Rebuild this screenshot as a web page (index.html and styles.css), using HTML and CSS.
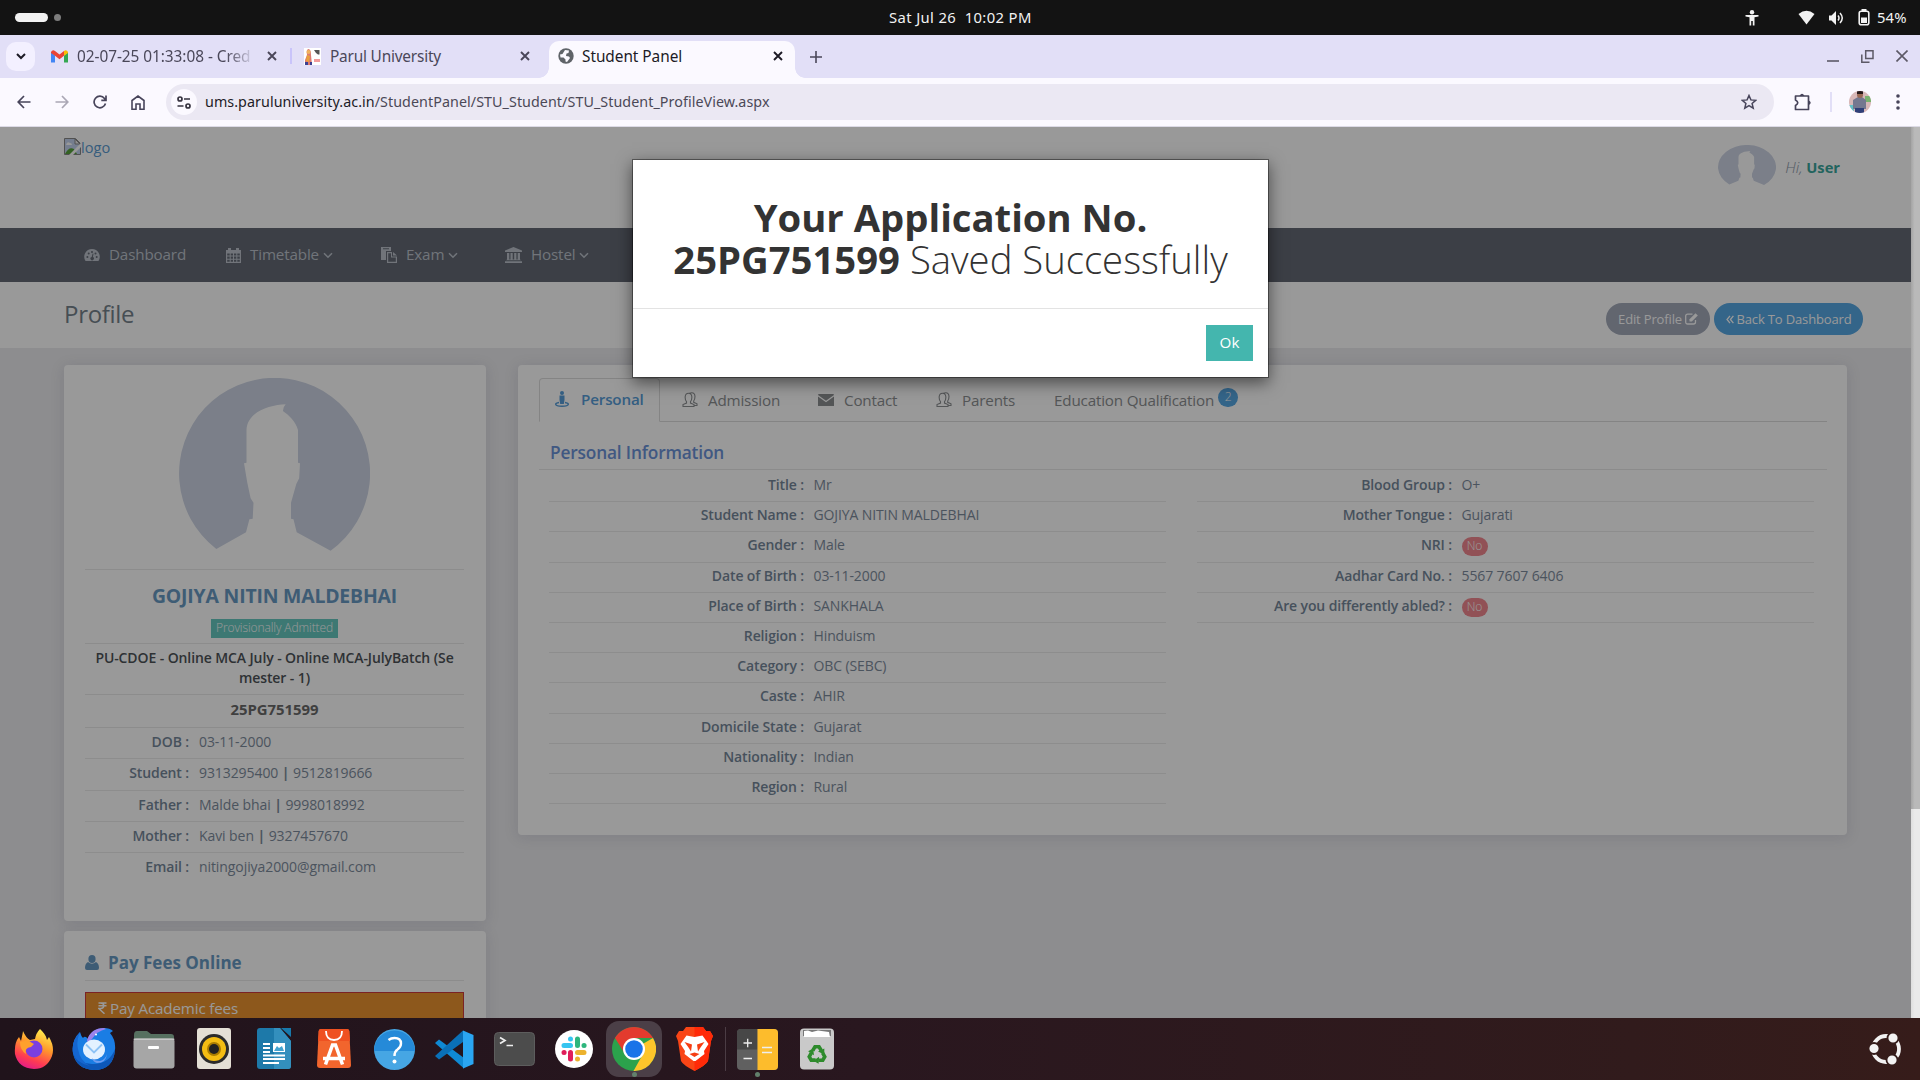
FILE: index.html
```html
<!DOCTYPE html>
<html lang="en">
<head>
<meta charset="utf-8">
<title>Student Panel</title>
<link rel="stylesheet" href="styles.css">
</head>
<body>
<svg class="defs" width="0" height="0">
  <symbol id="face" viewBox="0 0 191 173"><path fill="#cdd4e4" d="M37.3 171A95.5 95.5 0 1 1 151.6 172.7L117.7 154.3L114.5 141.3L112 140.7V124.7L117.3 106L120.2 100.3L121 85.3L119 84.7V52C117 44 110 37 103.9 33Q104 29 106.7 26.3C90 27 68 34 67.5 52V84.7L65 85.3L68.3 104.7L71.6 120.3L74.5 124.7L73.7 140.7L70.4 141.3L67 154.3Z"/></symbol>
  <symbol id="close" viewBox="0 0 10 10"><path d="M1 1L9 9M9 1L1 9" stroke="currentColor" stroke-width="1.9" fill="none"/></symbol>
  <symbol id="caret" viewBox="0 0 10 7"><path d="M1 1.2L5 5.2L9 1.2" stroke="currentColor" stroke-width="1.5" fill="none"/></symbol>
  <symbol id="people" viewBox="0 0 16 16"><path d="M6.5 14.5H1V12.6L4.5 11.1V9.6C3.4 8.4 3 6.8 3.2 4.6C3.4 2.4 4.6 1.3 6.5 1.3S9.600 2.400 9.800 4.600C10 6.800 9.600 8.400 8.500 9.600V11.100L12 12.600V14.500H6.500M7.500 1.300C10 0 13 1 13 4.300C13 7 12.500 8 11.700 9V10.300L15 11.800V13.500H12" fill="none" stroke="currentColor" stroke-width="1.1"/></symbol>
</svg>

<div class="topbar">
  <div class="spaces"><i class="pill"></i><i class="dot"></i></div>
  <div class="clock">Sat Jul 26&nbsp; 10:02 PM</div>
  <div class="tray">
    <svg class="access" width="14" height="16" viewBox="0 0 14 16" fill="#f2f2f2"><circle cx="7" cy="2.200" r="2.200"/><path d="M.5 5H13.500V6.600L9.500 7.200V15.500H7.800V11H6.200V15.500H4.500V7.200L.5 6.600Z"/></svg>
    <svg class="wifi" width="17" height="15" viewBox="0 0 17 15" fill="#f2f2f2"><path d="M.5 4Q8.500 -2.500 16.500 4L8.500 14.500Z"/></svg>
    <svg class="vol" width="17" height="16" viewBox="0 0 17 16"><path d="M1 5.500H3.500L8 1V15L3.500 10.500H1Z" fill="#f2f2f2"/><path d="M10 5.500Q12 8 10 10.500M12 3Q16.500 8 12 13" stroke="#f2f2f2" stroke-width="1.500" fill="none"/></svg>
    <svg class="bat" width="12" height="17" viewBox="0 0 12 17"><rect x="1.200" y="2.200" width="9.600" height="13.600" rx="2" fill="none" stroke="#f2f2f2" stroke-width="1.600"/><path d="M3.500 0H8.500V2H3.500ZM3 8.500H9V14H3Z" fill="#f2f2f2"/></svg>
    <span class="pct">54%</span>
  </div>
</div>

<div class="tabstrip">
  <div class="tabsearch"><svg width="10" height="7"><path d="M1 1L5 5L9 1" stroke="#1d1b26" stroke-width="2" fill="none"/></svg></div>
  <div class="tab tab1">
    <svg width="17" height="13" viewBox="0 0 17 13"><path d="M0 2V12.500H4V5.500Z" fill="#4285f4"/><path d="M17 2V12.500H13V5.500Z" fill="#34a853"/><path d="M0 2Q1.500-.8 4 1L8.500 4.600L13 1V5.700L8.500 9.300L4 5.700L0 3Z" fill="#ea4335"/><path d="M13 1Q15.500-.8 17 2V3L13 5.700Z" fill="#fbbc04"/></svg>
    <span class="tt fade">02-07-25 01:33:08 - Cred</span>
    <svg class="x" width="10" height="10"><use href="#close"/></svg>
  </div>
  <div class="tab tab2">
    <svg width="17" height="17" viewBox="0 0 17 17"><rect width="17" height="17" fill="#fff"/><path d="M1 17V12L3 7Q2 1 4.500 1T7 7L8 17Z" fill="#dd7a70"/><circle cx="4.500" cy="4" r="2" fill="#f0b25c"/><path d="M3 7L6 8L5 14L2 13Z" fill="#e9a13c"/><path d="M1 14H4V17H1ZM6 14H8V17H6Z" fill="#3c3f90"/><path d="M10 2H15.500V6.500H14L12 5Z" fill="#555"/><path d="M10 11H16V14H10Z" fill="#f29a9a"/></svg>
    <span class="tt">Parul University</span>
    <svg class="x" width="10" height="10"><use href="#close"/></svg>
  </div>
  <div class="tab active">
    <svg width="16" height="16" viewBox="0 0 16 16"><circle cx="8" cy="8" r="7.700" fill="#5f6368"/><path d="M7 2L11 2.500L10.500 5L8.500 5.500L8 8L11 8.500L12 10L9 14L7.500 13.500L7.500 11.500L5.500 9.500H2.500L2 6.500L4.500 6Z" fill="#fbf9ff"/></svg>
    <span class="tt">Student Panel</span>
    <svg class="x" width="10" height="10"><use href="#close"/></svg>
  </div>
  <svg class="plus" width="12" height="12"><path d="M6 0V12M0 6H12" stroke="#4a4759" stroke-width="1.600"/></svg>
  <div class="wins">
    <svg width="12" height="12"><path d="M0 11H12" stroke="#5c5966" stroke-width="1.600"/></svg>
    <svg width="13" height="13"><path d="M4.700.8H12V8.500H4.700ZM.8 4.500V12.200H8.500" fill="none" stroke="#5c5966" stroke-width="1.500"/></svg>
    <svg width="12" height="12"><path d="M.5.5L11.500 11.500M11.500.5L.5 11.500" stroke="#5c5966" stroke-width="1.600"/></svg>
  </div>
</div>

<div class="toolbar">
  <div class="navs">
    <svg width="14" height="14"><path d="M7 1L1.200 7L7 13M1.200 7H13.500" fill="none" stroke="#47445a" stroke-width="1.700"/></svg>
    <svg width="14" height="14"><path d="M7 1L12.800 7L7 13M12.800 7H.5" fill="none" stroke="#aaa7b5" stroke-width="1.700"/></svg>
    <svg width="14" height="14"><path d="M12.500 8.500A5.800 5.800 0 1 1 11.500 3.400L12.500 5M13 .5V5.300H8.300" fill="none" stroke="#47445a" stroke-width="1.700"/></svg>
    <svg width="14" height="15"><path d="M1 14.200V5.500L7 1L13 5.500V14.200H9V9H5V14.200Z" fill="none" stroke="#47445a" stroke-width="1.600"/></svg>
  </div>
  <div class="omni">
    <div class="site"><svg width="14" height="13"><g fill="none" stroke="#35323f" stroke-width="1.700"><circle cx="3" cy="3" r="2"/><path d="M7 3H13M.5 10H6.500"/><circle cx="11" cy="10" r="2"/></g></svg></div>
    <span class="url"><b>ums.paruluniversity.ac.in</b>/StudentPanel/STU_Student/STU_Student_ProfileView.aspx</span>
    <svg class="star" width="16" height="16" viewBox="0 0 16 16"><path d="M8 1.500L9.900 5.900L14.700 6.300L11.100 9.500L12.200 14.200L8 11.700L3.800 14.200L4.900 9.500L1.300 6.300L6.100 5.900Z" fill="none" stroke="#47445a" stroke-width="1.500"/></svg>
  </div>
  <svg class="ext" width="18" height="18" viewBox="0 0 18 18"><path d="M1.500 3H14.500V16.500H1.500V12.500Q6 9.700 1.500 7Z" fill="none" stroke="#47445a" stroke-width="1.700" stroke-linejoin="round"/><path d="M5.500 3Q8-1.500 10.500 3ZM14.500 7.200Q19 9.700 14.500 12.200Z" fill="#47445a"/></svg>
  <i class="bar"></i>
  <svg class="me" width="22" height="22" viewBox="0 0 22 22"><defs><clipPath id="mc"><circle cx="11" cy="11" r="11"/></clipPath></defs><g clip-path="url(#mc)"><path fill="#d8b8b8" d="M0 0H22V22H0Z"/><path fill="#78b26e" d="M16 5H22V11H16Z"/><path fill="#62c0c6" d="M0 14H5V22H0Z"/><path fill="#747890" d="M4 9L9 6H13L17 9V18H4Z"/><path fill="#2f3f78" d="M6 17H15V22H6Z"/><circle cx="11" cy="4" r="3" fill="#9b6a55"/><path fill="#26191b" d="M8 0H14V3H8Z"/></g></svg>
  <svg class="dots" width="4" height="16" fill="#47445a"><circle cx="2" cy="2" r="1.800"/><circle cx="2" cy="8" r="1.800"/><circle cx="2" cy="14" r="1.800"/></svg>
</div>

<div class="viewport">
 <div class="page">
  <header class="head">
    <a class="logo"><svg width="17" height="17" viewBox="0 0 17 17"><path d="M.5.5H11.500L16.500 5.500V16.500H.5Z" fill="#c4d3ee" stroke="#888"/><path d="M11 1V6H16Z" fill="#eee" stroke="#888"/><path d="M1 16Q5 8 10 11L13 16Z" fill="#57a33b"/><path d="M2 7Q3 3 6 5Q8 5 8 7Z" fill="#fff"/><path d="M17 5V9L9 17H5Z" fill="#fff"/></svg>logo</a>
    <div class="user"><svg width="58" height="40" viewBox="0 0 191 173" preserveAspectRatio="none"><use href="#face" width="191" height="173"/></svg><span class="hi"><i>Hi,</i> <b>User</b></span></div>
  </header>
  <nav class="menu">
    <a class="m1"><svg width="16" height="16" viewBox="0 0 16 16" fill="currentColor"><path fill-rule="evenodd" d="M8 2A7.800 7.800 0 0 0 1.500 14H14.500A7.800 7.800 0 0 0 8 2ZM3.400 9A1 1 0 1 1 3.400 11A1 1 0 1 1 3.400 9M4.700 5.600A1 1 0 1 1 4.700 7.600A1 1 0 1 1 4.700 5.600M8 4A1 1 0 1 1 8 6A1 1 0 1 1 8 4M11.500 5.600A1 1 0 1 1 11.500 7.600A1 1 0 1 1 11.500 5.600M12.700 9A1 1 0 1 1 12.700 11A1 1 0 1 1 12.700 9M8.700 6.500L9.500 6.700L8.900 10A1.700 1.700 0 1 1 7.700 9.900Z"/></svg><span>Dashboard</span></a>
    <a class="m2"><svg width="15" height="16" viewBox="0 0 15 16"><path fill="currentColor" fill-rule="evenodd" d="M0 3H2V1H5V3H10V1H13V3H15V16H0ZM1.200 6.500V8.500H3.700V6.500ZM4.700 6.500V8.500H7V6.500ZM8 6.500V8.500H10.300V6.500ZM11.300 6.500V8.500H13.800V6.500ZM1.200 9.500V11.700H3.700V9.500ZM4.700 9.500V11.700H7V9.500ZM8 9.500V11.700H10.300V9.500ZM11.300 9.500V11.700H13.800V9.500ZM1.200 12.700V14.800H3.700V12.700ZM4.700 12.700V14.800H7V12.700ZM8 12.700V14.800H10.300V12.700ZM11.300 12.700V14.800H13.800V12.700Z"/></svg><span>Timetable</span><svg width="10" height="7"><use href="#caret"/></svg></a>
    <a class="m3"><svg width="16" height="16" viewBox="0 0 16 16" fill="currentColor"><path fill-rule="evenodd" d="M0 0H10V4H5V13H0ZM2 1.200V2.200H8V1.200ZM6 5H11V9.500H16V16H6ZM12 5L16 8.500H12ZM7.200 6.200V14.800H14.800V10.500H10V6.200Z"/></svg><span>Exam</span><svg width="10" height="7"><use href="#caret"/></svg></a>
    <a class="m4"><svg width="17" height="16" viewBox="0 0 17 16" fill="currentColor"><path d="M8.500 0L17 3.500V5H0V3.500ZM2 6H4.300V12.500H5.500V6H7.700V12.500H9.200V6H11.400V12.500H12.700V6H15V12.500L16 13.200H1L2 12.500ZM0 14.200H17V16H0Z"/></svg><span>Hostel</span><svg width="10" height="7"><use href="#caret"/></svg></a>
  </nav>
  <div class="title">
    <h1>Profile</h1>
    <div class="btns"><a class="btn grey">Edit Profile <svg width="13" height="12" viewBox="0 0 13 12"><path d="M10.500 7V9Q10.500 11 8.500 11H2.700Q.7 11 .7 9V3Q.7 1.200 2.700 1.200H7.500" fill="none" stroke="currentColor" stroke-width="1.300"/><path d="M4.500 8.500V6.200L10.500.2L12.800 2.500L6.800 8.500Z" fill="currentColor"/></svg></a><a class="btn blue"><svg width="8" height="9"><path d="M4 .8L1 4.500L4 8.200M7.400.8L4.400 4.500L7.400 8.200" fill="none" stroke="currentColor" stroke-width="1.300"/></svg> Back To Dashboard</a></div>
  </div>
  <main class="content">
    <aside class="side">
      <section class="card bio">
        <svg class="avatar" width="191" height="173"><use href="#face"/></svg>
        <h2>GOJIYA NITIN MALDEBHAI</h2>
        <div class="status"><span>Provisionally Admitted</span></div>
        <p class="course">PU-CDOE - Online MCA July - Online MCA-JulyBatch (Se<br>mester - 1)</p>
        <p class="appno">25PG751599</p>
        <dl class="rows">
          <div><dt>DOB :</dt><dd>03-11-2000</dd></div>
          <div><dt>Student :</dt><dd>9313295400 <b>|</b> 9512819666</dd></div>
          <div><dt>Father :</dt><dd>Malde bhai <b>|</b> 9998018992</dd></div>
          <div><dt>Mother :</dt><dd>Kavi ben <b>|</b> 9327457670</dd></div>
          <div><dt>Email :</dt><dd>nitingojiya2000@gmail.com</dd></div>
        </dl>
      </section>
      <section class="card fees">
        <h3><svg width="14" height="15" viewBox="0 0 14 15" fill="currentColor"><ellipse cx="7" cy="4" rx="3.600" ry="4"/><path d="M3 7Q7 10.500 11 7Q14 8.500 14 13Q14 15 12 15H2Q0 15 0 13Q0 8.500 3 7Z"/></svg>Pay Fees Online</h3>
        <a class="pay"><svg width="9" height="12" viewBox="0 0 9 12"><path d="M.5 1H8.500M.5 3.700H8.500M.5 1H2.500Q5.800 1 5.800 3.700T2.500 6.500H.8L6.500 11.700" fill="none" stroke="currentColor" stroke-width="1.500"/></svg>Pay Academic fees</a>
      </section>
    </aside>
    <section class="card info">
      <div class="ptabs">
        <a class="pt on"><svg width="14" height="16" viewBox="0 0 14 16"><circle cx="7" cy="2" r="2" fill="currentColor"/><path d="M4.500 4.500H9.500V9L8.800 13H5.200L4.500 9Z" fill="currentColor"/><path d="M4 11.500Q.7 12 .7 13.300Q1 15.200 7 15.200T13.300 13.300Q13.300 12 10 11.500" fill="none" stroke="currentColor" stroke-width="1.400"/></svg>Personal</a>
        <a class="pt adm"><svg width="16" height="16"><use href="#people"/></svg>Admission</a>
        <a class="pt con"><svg width="16" height="12" viewBox="0 0 16 12" fill="currentColor"><path d="M.5 0H15.500L16 1L8 6.800L0 1ZM0 2.500L8 8.300L16 2.500V12H0Z"/></svg>Contact</a>
        <a class="pt par"><svg width="16" height="16"><use href="#people"/></svg>Parents</a>
        <a class="pt edu">Education Qualification<em>2</em></a>
      </div>
      <h3 class="sec">Personal Information</h3>
      <div class="cols">
        <dl class="rows">
          <div><dt>Title :</dt><dd>Mr</dd></div>
          <div><dt>Student Name :</dt><dd>GOJIYA NITIN MALDEBHAI</dd></div>
          <div><dt>Gender :</dt><dd>Male</dd></div>
          <div><dt>Date of Birth :</dt><dd>03-11-2000</dd></div>
          <div><dt>Place of Birth :</dt><dd>SANKHALA</dd></div>
          <div><dt>Religion :</dt><dd>Hinduism</dd></div>
          <div><dt>Category :</dt><dd>OBC (SEBC)</dd></div>
          <div><dt>Caste :</dt><dd>AHIR</dd></div>
          <div><dt>Domicile State :</dt><dd>Gujarat</dd></div>
          <div><dt>Nationality :</dt><dd>Indian</dd></div>
          <div><dt>Region :</dt><dd>Rural</dd></div>
        </dl>
        <dl class="rows">
          <div><dt>Blood Group :</dt><dd>O+</dd></div>
          <div><dt>Mother Tongue :</dt><dd>Gujarati</dd></div>
          <div><dt>NRI :</dt><dd><span class="no">No</span></dd></div>
          <div><dt>Aadhar Card No. :</dt><dd>5567 7607 6406</dd></div>
          <div><dt>Are you differently abled? :</dt><dd><span class="no">No</span></dd></div>
        </dl>
      </div>
    </section>
  </main>
  <div class="shade"></div>
  <div class="modal">
    <div class="mbody"><b>Your Application No.<br>25PG751599</b> Saved Successfully</div>
    <div class="mfoot"><button>Ok</button></div>
  </div>
 </div>
 <div class="scroll"><i></i></div>
</div>

<footer class="dock">
  <div class="app"><svg width="40" height="42" viewBox="0 0 40 42"><defs><linearGradient id="ff" x1=".7" y1="0" x2=".3" y2="1"><stop offset="0" stop-color="#fff14f"/><stop offset=".4" stop-color="#ff9a2b"/><stop offset=".75" stop-color="#ff3b52"/><stop offset="1" stop-color="#e01b8a"/></linearGradient></defs><path d="M26 1C29 4 32 7 33 12L35 9Q41 19 38 28Q33 41 20 41Q4 40 1 26Q0 15 5 9L7 13Q9 4 9 3Q12 10 16 12L21 11Q22 5 26 1Z" fill="url(#ff)"/><circle cx="20" cy="21" r="8.500" fill="#7b3fe0"/><path d="M6 14Q14 11 20 16L17 19Q10 20 12 26Q6 22 6 14Z" fill="#ffa02c"/></svg></div>
  <div class="app"><svg width="44" height="44" viewBox="0 0 44 44"><path d="M16 12Q20 1 32 1Q38 1 41 4L38 6Q44 13 43 23Q41 43 22 43Q4 42 1 26Q-1 14 8 5Q9 9 11 11Q13 8 16 12Z" fill="#1a7de4"/><path d="M15 13Q19 1 32 1L34 2Q25 4 20 12L16 17Z" fill="#9b82ec"/><path d="M1 26Q8 38 22 37Q38 36 43 22Q42 43 22 43Q4 42 1 26Z" fill="#0d57b8"/><path d="M8 5Q4 14 6 22Q8 34 18 39Q4 36 1 26Q-1 14 8 5Z" fill="#1566cf"/><ellipse cx="22" cy="22.500" rx="11" ry="10" fill="#e3f1ff"/><path d="M14 17.500L22 25.500L30 17.500" fill="none" stroke="#8cc2f5" stroke-width="1.800"/><path d="M20 31Q22 34 28 34Q33 33 35 27Q34 36 25 36Q21 35 20 31Z" fill="#6f9cf0"/><circle cx="24" cy="7.500" r="1" fill="#fff"/></svg></div>
  <div class="app"><svg width="42" height="40" viewBox="0 0 42 40"><path d="M1 6Q1 2 4 2H14L18 5H38Q41 5 41 8V20H1Z" fill="#577060"/><rect x=".5" y="9.500" width="41" height="30" rx="3" fill="#a6a6a6"/><rect x=".5" y="9.500" width="41" height="1.500" rx=".7" fill="#c7c7c7"/><rect x="15" y="17" width="11" height="3" rx="1" fill="#fff"/></svg></div>
  <div class="app"><svg width="34" height="42" viewBox="0 0 34 42"><rect width="34" height="41" rx="3" fill="#e4dfd5"/><circle cx="17" cy="21" r="15" fill="#2b2b2b"/><circle cx="17" cy="21" r="12" fill="#f4bd13"/><circle cx="17" cy="21" r="7" fill="#a97c00"/><circle cx="17" cy="21" r="5" fill="#222"/></svg></div>
  <div class="app"><svg width="34" height="42" viewBox="0 0 34 42"><path d="M3 0H23L34 13V38Q34 41 31 41H3Q0 41 0 38V3Q0 0 3 0Z" fill="#1d79a9"/><path d="M17 0H23L34 13V38Q34 41 31 41H17Z" fill="#338fbd"/><path d="M24 0H34V9Z" fill="#1879ab"/><path d="M6 16H13M6 20H13M6 24H13M6 27.500H28M6 31H28M6 35H22" stroke="#fff" stroke-width="2"/><rect x="16" y="15" width="12" height="9" fill="#fff"/><path d="M17 23L20 18L22 20L25 18L27 23Z" fill="#43a3d0"/></svg></div>
  <div class="app"><svg width="34" height="40" viewBox="0 0 34 40"><path d="M4 0H30Q32 0 32.300 2L34 36Q34 39 31 39H3Q0 39 0 36L1.700 2Q2 0 4 0Z" fill="#f2652d"/><path d="M4 0H30Q32 0 32.300 2L33 12H1L1.700 2Q2 0 4 0Z" fill="#ef5121"/><path d="M9 2Q9 11 17 11T25 2" fill="none" stroke="#fff" stroke-width="1.800"/><path d="M8.500 35.500L15.500 16H18.500L25.500 35.500M6 29.500H28" fill="none" stroke="#fff" stroke-width="3.500"/></svg></div>
  <div class="app"><svg class="help" width="41" height="41" viewBox="0 0 41 41"><circle cx="20.500" cy="20.500" r="20.500" fill="#46a6e4"/><path d="M0 22A20.500 20.500 0 0 1 41 22Z" fill="#258ad8"/><path d="M14.500 11Q17 9 20.500 9Q27 9 27 14.500Q27 18 23.500 20.500Q20.500 22.500 20.500 27" fill="none" stroke="#fff" stroke-width="2.400"/><circle cx="20.500" cy="32.500" r="2" fill="#fff"/></svg></div>
  <div class="app"><svg width="39" height="39" viewBox="0 0 39 39"><path d="M0 13L4 9.500L29 28V38.500Z" fill="#0f8ad4"/><path d="M0 26L28 .5V12L4 29.500Z" fill="#0a70b7"/><path d="M28 .5L38.500 5V34L28 38.500Z" fill="#2aa6f2"/></svg></div>
  <div class="app"><svg width="41" height="34" viewBox="0 0 41 34"><rect x=".5" y=".5" width="40" height="33" rx="4" fill="#4c4c4c" stroke="#5d5d5d"/><path d="M6 5.500L11 8.500L6 11.500M12.500 13.500H19" fill="none" stroke="#eee" stroke-width="1.700"/></svg></div>
  <div class="app"><svg width="38" height="38" viewBox="0 0 38 38"><circle cx="19" cy="19" r="19" fill="#fff"/><g stroke-width="5" stroke-linecap="round"><path d="M15.500 9V9.100M9 15.500H15.500" stroke="#36c5f0"/><path d="M22.500 9V15.500M29 15.500H29.100" stroke="#2eb67d"/><path d="M9 22.500H9.100M15.500 22.500V29" stroke="#e01e5a"/><path d="M22.500 22.500H29M22.500 29V29.100" stroke="#ecb22e"/></g></svg></div>
  <div class="app sel"><svg width="44" height="44" viewBox="0 0 44 44"><circle cx="22" cy="22" r="22" fill="#2ba24c"/><path d="M22 22L41 11A22 22 0 0 1 21.500 44L31 27Z" fill="#fdc52b"/><path d="M3 11A22 22 0 0 1 41 11H22L13 27Z" fill="#e33b2e"/><circle cx="22" cy="22" r="11" fill="#fff"/><circle cx="22" cy="22" r="8.800" fill="#1a73e8"/></svg></div>
  <div class="app"><svg width="37" height="44" viewBox="0 0 37 44"><path d="M10 0H27L30 4L34 4L37 9L35 14L32 34Q30 38 18.500 44Q7 38 5 34L2 14L0 9L3 4L7 4Z" fill="#f94516"/><path d="M18.500 0H27L30 4H34L37 9L35 14L32 34Q30 38 18.500 44Z" fill="#ff2a08"/><path d="M10.500 8.500L18.500 10L26.500 8.500L32.500 17L28 24L28.500 27L19.500 34H17.500L8.500 27L9 24L4.500 17Z" fill="#fff"/><path d="M8.500 15L16 17.500L15 24.500L12.500 20.500ZM28.500 15L21 17.500L22 24.500L24.500 20.500ZM13.500 27L18.500 25.500L23.500 27L18.500 30Z" fill="#f63d12"/></svg></div>
  <i class="sep"></i>
  <div class="app calc"><svg width="41" height="41" viewBox="0 0 41 41"><rect width="41" height="41" rx="4" fill="#606060"/><path d="M4 0H20.500V20.500H0V4Q0 0 4 0Z" fill="#474747"/><path d="M20.500 0H37Q41 0 41 4V37Q41 41 37 41H20.500Z" fill="#fdbc2c"/><path d="M6.500 14H15M10.700 9.700V18.300M6.500 29.500H15M25 18.500H35M25 23.500H35" stroke="#eee" stroke-width="1.300"/></svg></div>
  <div class="app"><svg width="34" height="42" viewBox="0 0 34 42"><defs><g id="arrow"><path d="M12.800 22.500L15 18.700H19L21.300 22.500" fill="none" stroke="#2e8b2c" stroke-width="3.600"/><path d="M18 23.500L24.300 20.500V26.500Z" fill="#2e8b2c"/></g></defs><rect y=".5" width="34" height="41" rx="4" fill="#c9c9c9"/><path d="M3 2H31V8H3Z" fill="#777"/><path d="M4 3L8 2.500L12 4L18 2.500L29 4L30 9H4Z" fill="#fff"/><use href="#arrow"/><use href="#arrow" transform="rotate(120 17 26.500)"/><use href="#arrow" transform="rotate(240 17 26.500)"/></svg></div>
  <svg class="ubuntu" width="34" height="34" viewBox="0 0 34 34"><circle cx="17" cy="17" r="13" fill="none" stroke="#f3f3f3" stroke-width="3.800"/><g fill="#f3f3f3" stroke="#351d1b" stroke-width="1.800"><circle cx="5" cy="16.500" r="5.500"/><circle cx="24" cy="6" r="5.500"/><circle cx="23" cy="28" r="5.500"/></g></svg>
</footer>
</body>
</html>
```
FILE: styles.css
```css
* { box-sizing: border-box; }
body { margin: 0; width: 1920px; height: 1080px; overflow: hidden; display: flex; flex-direction: column; font-family: "Open Sans", sans-serif; font-size: 14px; color: #333; }
svg { display: block; flex: none; }
.defs { position: absolute; }
h1, h2, h3, p, dl, dd { margin: 0; }

/* desktop top bar */
.topbar { height: 35px; flex: none; background: #131313; color: #f2f2f2; display: grid; grid-template-columns: 1fr 142px 1fr; align-items: center; font: 14.8px/1 "Noto Sans", sans-serif; white-space: nowrap; }
.spaces { display: flex; align-items: center; gap: 6px; padding-left: 15px; }
.pill { width: 33px; height: 9px; border-radius: 5px; background: #f2f2f2; }
.dot { width: 7px; height: 7px; border-radius: 50%; background: #7d7d7d; }
.clock { text-align: center; letter-spacing: .38px; padding-bottom: 1px; }
.tray { display: flex; align-items: center; justify-content: flex-end; padding-right: 12px; }
.wifi { margin-left: 39px; }
.vol { margin-left: 13px; }
.bat { margin-left: 13px; }
.pct { margin-left: 7px; width: 31px; letter-spacing: .1px; padding-bottom: 1px; }

/* browser tabs */
.tabstrip { height: 43px; flex: none; background: #e2dff7; display: flex; align-items: center; font: 15.4px/20px "Noto Sans", sans-serif; color: #4a4759; letter-spacing: -.05px; }
.tabsearch { width: 29px; height: 29px; margin-left: 6px; border-radius: 10px; background: #f3f0ff; display: grid; place-items: center; }
.tab { display: flex; align-items: center; height: 37px; margin-top: 6px; padding-bottom: 7px; white-space: nowrap; }
.tt { margin-left: 9px; flex: 1; overflow: hidden; padding-top: 1px; }
.tab1 { width: 257px; padding-left: 16px; padding-right: 14px; position: relative; }
.tab1 .tt { flex: 0 0 178px; margin-right: 12px; }
.tab1::after { content: ""; position: absolute; right: 0; top: 7px; width: 2px; height: 16px; background: #c9c4fa; }
.fade { -webkit-mask-image: linear-gradient(90deg, #000 84%, transparent); mask-image: linear-gradient(90deg, #000 84%, transparent); }
.tab2 { width: 257px; padding-left: 12px; padding-right: 19px; letter-spacing: -.2px; }
.active { width: 246px; padding: 0 12px 7px 9px; background: #fbf9ff; border-radius: 10px 10px 0 0; color: #1d1b26; position: relative; }
.active .tt { margin-left: 8px; }
.active::before, .active::after { content: ""; position: absolute; bottom: 0; width: 10px; height: 10px; }
.active::before { right: 100%; background: radial-gradient(circle at 0 0, transparent 9.5px, #fbf9ff 10px); }
.active::after { left: 100%; background: radial-gradient(circle at 100% 0, transparent 9.5px, #fbf9ff 10px); }
.plus { margin-left: 15px; }
.wins { margin-left: auto; margin-right: 12px; display: flex; gap: 22px; }

.toolbar { height: 49px; flex: none; background: #fbf9ff; border-bottom: 1px solid #dcdae6; display: flex; align-items: center; }
.navs { display: flex; gap: 24px; padding-left: 17px; width: 166px; align-items: center; }
.omni { width: 1608px; height: 36px; border-radius: 18px; background: #ebe8f3; display: flex; align-items: center; padding: 0 17px 0 5px; }
.site { width: 26px; height: 26px; border-radius: 50%; background: #fbf9ff; display: grid; place-items: center; }
.url { margin-left: 8px; flex: 1; font: 14.3px/20px "Noto Sans", sans-serif; color: #4b4857; letter-spacing: .06px; }
.url b { font-weight: 400; color: #1d1b26; }
.ext { margin-left: 20px; }
.bar { width: 2px; height: 20px; margin-left: 18px; background: #e2dff7; }
.me { margin-left: 17px; }
.dots { margin-left: 25px; }

/* web page */
.viewport { flex: 1; min-height: 0; display: flex; }
.page { width: 1911px; position: relative; overflow: hidden; background: #ebebee; }
.scroll { width: 9px; background: linear-gradient(90deg, #a4a4a4, #b9b9b9 40%); display: flex; align-items: flex-end; }
.scroll i { width: 100%; height: 209px; background: linear-gradient(90deg, #dedede, #eaeaea 40%); }
.head { height: 101px; background: #fff; display: flex; justify-content: space-between; padding: 11px 71px 0 64px; }
.logo { display: flex; height: 20px; color: #5c9bd1; font-size: 14.6px; line-height: 19px; }
.user { display: flex; height: 40px; margin-top: 7px; gap: 9px; }
.hi { line-height: 45px; white-space: nowrap; font-size: 14.7px; }
.hi i { color: #8a97a8; font-weight: 300; font-size: 15.4px; }
.hi b { color: #3aa79d; }
.menu { height: 54px; background: #646a76; color: #bcc2cb; display: flex; align-items: center; padding-left: 84px; font-size: 15.2px; letter-spacing: -.15px; line-height: 20px; }
.menu a { display: flex; align-items: center; gap: 9px; }
.menu span { padding-bottom: 2px; }
.menu span + svg { margin-left: -5px; }
.m1 { width: 142px; } .m2 { width: 155px; } .m3 { width: 124px; }
.title { height: 66px; background: #fff; display: flex; justify-content: space-between; padding: 0 48px 0 64px; }
.title h1 { font-size: 24px; letter-spacing: -.3px; font-weight: 400; line-height: 64px; color: #76828c; }
.btns { display: flex; gap: 4px; padding-top: 21px; }
.btn { height: 32px; border-radius: 16px; display: flex; align-items: center; justify-content: center; gap: 3px; color: #fff; font-size: 13px; letter-spacing: -.15px; white-space: nowrap; }
.grey { width: 104px; background: #a3aaba; }
.blue { width: 149px; background: #57a8e4; }
.content { display: flex; gap: 32px; padding: 17px 0 0 64px; align-items: flex-start; }
.side { width: 422px; display: grid; gap: 10px; }
.card { background: #fff; border-radius: 4px; box-shadow: 0 2px 14px 1px rgba(69, 65, 110, .12); }
.bio { height: 556px; padding: 13px 22px 0 21px; }
.avatar { margin: 0 auto; }
.bio h2 { margin-top: 18px; border-top: 1px solid #eaeaea; height: 50px; padding-top: 12px; text-align: center; font-size: 19.4px; letter-spacing: -.18px; font-weight: 700; line-height: 27px; color: #689ac4; }
.status { height: 25px; text-align: center; display: flex; justify-content: center; border-bottom: 1px solid #eaeaea; }
.status span { width: 127px; height: 19px; background: #67c8c0; color: #fff; font-size: 12px; letter-spacing: -.1px; line-height: 18px; font-weight: 300; white-space: nowrap; }
.course { text-align: center; font-weight: 600; letter-spacing: -.1px; line-height: 20px; height: 51px; padding-top: 4px; border-bottom: 1px solid #eaeaea; color: #4d5358; white-space: nowrap; }
.appno { text-align: center; font-weight: 700; font-size: 14.9px; height: 33px; line-height: 28px; border-bottom: 1px solid #eaeaea; color: #6a6a6a; }
.rows > div { display: flex; gap: 10px; border-bottom: 1px solid #ececec; white-space: nowrap; }
.rows dt { text-align: right; font-weight: 600; letter-spacing: -.12px; color: #76879a; flex: none; }
.rows dd { letter-spacing: -.11px; color: #7e8c9d; }
.bio .rows > div { height: 31.25px; line-height: 28px; }
.bio .rows > div:last-child { border: 0; }
.bio dt { width: 104px; }
.bio dd { letter-spacing: -.08px; }
.fees { height: 120px; padding: 18px 22px 0 21px; }
.fees h3 { height: 32px; border-bottom: 1px solid #eaeaea; display: flex; align-items: center; gap: 9px; font-size: 17px; font-weight: 700; line-height: 20px; color: #689ac4; padding-bottom: 4px; }
.pay { margin-top: 11px; height: 40px; border: 1px solid #cd393f; background: #eb932f; color: #fff; display: flex; align-items: flex-start; gap: 3px; padding: 5px 12px; font-size: 15.2px; letter-spacing: -.16px; line-height: 21px; }
.pay svg { margin-top: 4px; }
.info { width: 1329px; height: 470px; padding: 13px 20px 0 21px; }
.ptabs { height: 44px; border-bottom: 1px solid #dcdcdc; display: flex; align-items: flex-start; color: #8c8f92; font-size: 15.2px; letter-spacing: -.17px; line-height: 42px; white-space: nowrap; }
.pt { display: flex; align-items: center; gap: 10px; height: 43px; }
.on { width: 121px; height: 44px; padding: 0 0 2px 15px; gap: 12px; border: 1px solid #dcdcdc; border-bottom-color: #fff; border-radius: 4px 4px 0 0; color: #579dd9; font-weight: 600; background: #fff; }
.adm { margin-left: 22px; width: 136px; } .con { width: 118px; } .par { width: 118px; }
.edu { gap: 4px; }
.edu em { font-style: normal; font-weight: 300; font-size: 12.1px; width: 20px; height: 19px; line-height: 17px; border-radius: 10px; text-align: center; background: #57a8e4; color: #fff; margin-top: -4px; }
.sec { height: 48px; border-bottom: 1px solid #e8e8e8; font-size: 17.3px; letter-spacing: -.17px; font-weight: 600; line-height: 61px; padding-left: 11px; color: #6c93d9; }
.cols { display: flex; gap: 31px; padding: 2px 0 0 10px; }
.cols .rows { width: 617px; }
.cols .rows > div { height: 30.2px; line-height: 26px; }
.cols dt { width: 255px; }
.cols dd { margin-left: -.5px; }
.no { display: inline-block; width: 26px; height: 19px; line-height: 18px; border-radius: 10px; background: #f28890; color: #fff; font-size: 12.1px; font-weight: 300; text-align: center; margin-top: 5px; vertical-align: top; }
.shade { position: absolute; inset: 0; background: rgba(0, 0, 0, .4); }
.modal { position: absolute; left: 632px; top: 32px; width: 637px; height: 219px; background: #fff; background-clip: padding-box; border: 1px solid rgba(0, 0, 0, .4); box-shadow: 0 5px 15px rgba(0, 0, 0, .5); }
.mbody { height: 149px; padding-top: 36px; border-bottom: 1px solid #e3e3e3; text-align: center; font-size: 38.25px; line-height: 42.35px; font-weight: 300; color: #333; white-space: nowrap; }
.mbody b { font-weight: 700; }
.mfoot { display: flex; justify-content: flex-end; padding: 16px 15px 0 0; }
.mfoot button { width: 47px; height: 36px; border: 0; padding: 0 0 3px; background: #44b6ae; color: #fff; font: 15.2px/20px "Open Sans", sans-serif; }

/* dock */
.dock { height: 62px; flex: none; background: linear-gradient(90deg, #20131b, #29171f 45%, #311b1c 85%, #361c1a); display: flex; align-items: center; padding-left: 4px; }
.app { width: 60px; height: 56px; display: grid; place-items: center; position: relative; }
.sel { width: 56px; margin: 0 2px; border-radius: 13px; background: #4b3f47; }
.sel::after, .calc::after { content: ""; position: absolute; bottom: 0; left: calc(50% - 2.5px); width: 5px; height: 5px; border-radius: 50%; background: #62806c; }
.sep { width: 1px; height: 44px; background: #4b3c44; margin: 0 1px; }
.ubuntu { margin-left: auto; margin-right: 17px; }
```
